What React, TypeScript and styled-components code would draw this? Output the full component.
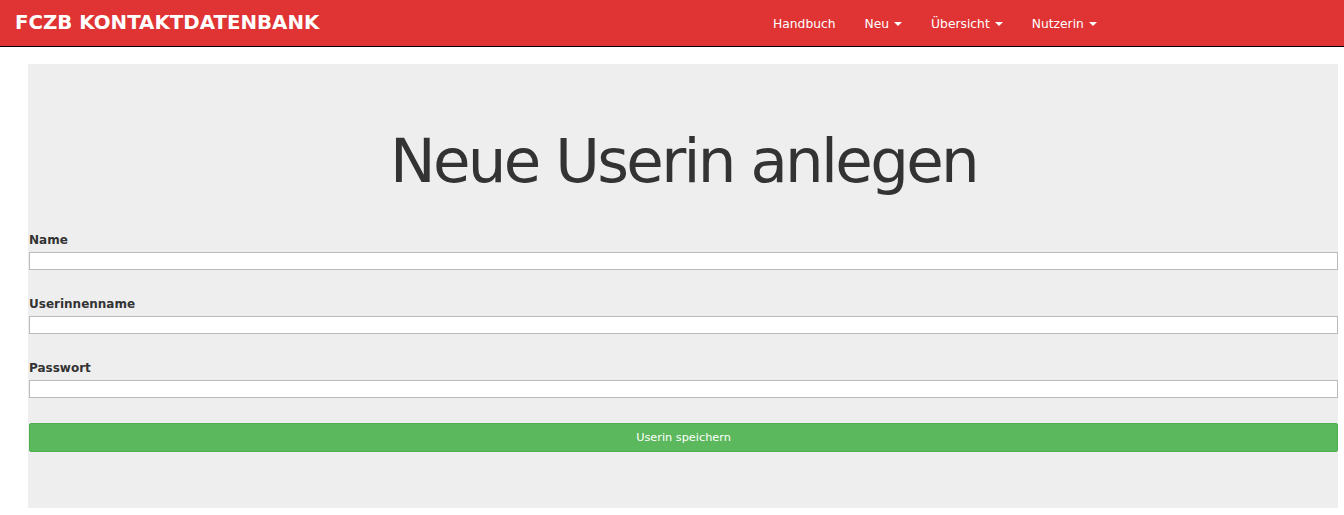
import React from "react";
import styled, { createGlobalStyle } from "styled-components";

const Global = createGlobalStyle`
  html, body { margin: 0; padding: 0; background: #fff; }
  body { font-family: "DejaVu Sans", Verdana, sans-serif; color: #333; }
  * { box-sizing: border-box; }
`;

const NavBar = styled.nav`
  height: 47px;
  background: #e03434;
  border-bottom: 1px solid #000;
  display: flex;
  align-items: center;
  padding-left: 15px;
`;

const Brand = styled.div`
  color: #fff;
  font-weight: bold;
  font-size: 19.8px;
  width: 758px;
  flex-shrink: 0;
  padding-bottom: 2px;
`;

const NavList = styled.ul`
  list-style: none;
  margin: 0;
  padding: 0;
  display: flex;
  gap: 29px;
  padding-top: 1px;
`;

const NavItem = styled.li`
  color: #fff;
  font-size: 12.3px;
  display: flex;
  align-items: center;
  gap: 5px;
`;

const Caret = styled.span`
  display: inline-block;
  width: 0;
  height: 0;
  border-left: 4px solid transparent;
  border-right: 4px solid transparent;
  border-top: 4px solid #fff;
`;

const Page = styled.main`
  padding: 17px 6px 0 28px;
`;

const Jumbo = styled.section`
  background: #eeeeee;
  padding: 63px 0 56px 1px;
`;

const Title = styled.h1`
  margin: 0 0 39px;
  text-align: center;
  font-weight: normal;
  font-size: 61px;
  line-height: 1.1;
  letter-spacing: -2.7px;
  color: #333;
`;

const Form = styled.form`
  display: flex;
  flex-direction: column;
`;

const Field = styled.div`
  display: flex;
  flex-direction: column;
  margin-bottom: 27px;
`;

const Label = styled.label`
  font-size: 12px;
  font-weight: bold;
  color: #333;
  margin-bottom: 5px;
`;

const Input = styled.input`
  height: 18px;
  border: 1px solid #bbb;
  background: #fff;
  padding: 0 4px;
  width: 100%;
`;

const Button = styled.button`
  margin-top: -2px;
  height: 29px;
  background: #5cb85c;
  border: 1px solid #4cae4c;
  border-radius: 2px;
  color: #fff;
  font-family: inherit;
  font-size: 11.3px;
  width: 100%;
`;

export default function App() {
  return (
    <>
      <Global />
      <NavBar>
        <Brand>FCZB KONTAKTDATENBANK</Brand>
        <NavList>
          <NavItem>Handbuch</NavItem>
          <NavItem>Neu <Caret /></NavItem>
          <NavItem>Übersicht <Caret /></NavItem>
          <NavItem>Nutzerin <Caret /></NavItem>
        </NavList>
      </NavBar>
      <Page>
        <Jumbo>
          <Title>Neue Userin anlegen</Title>
          <Form>
            <Field>
              <Label>Name</Label>
              <Input type="text" />
            </Field>
            <Field>
              <Label>Userinnenname</Label>
              <Input type="text" />
            </Field>
            <Field>
              <Label>Passwort</Label>
              <Input type="password" />
            </Field>
            <Button type="button">Userin speichern</Button>
          </Form>
        </Jumbo>
      </Page>
    </>
  );
}
